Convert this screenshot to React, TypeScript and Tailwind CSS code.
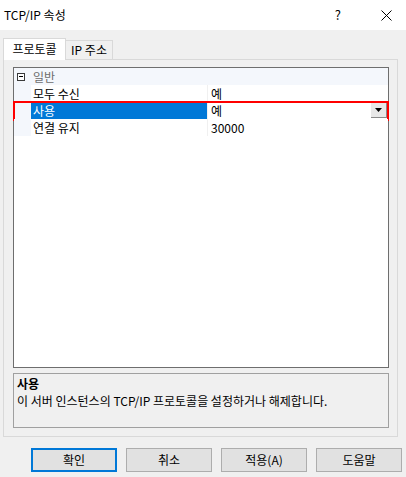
import React from "react";

const font = "font-['Noto_Sans_CJK_KR','Noto_Sans',sans-serif]";

function Row({ name, value, selected }: { name: string; value: string; selected?: boolean }) {
  return (
    <div className="relative flex h-[17px] items-stretch">
      <div className="w-[17px] bg-[#f4f7fc]" />
      <div
        className={
          "flex w-[176px] items-center pl-[2px] " +
          (selected ? "bg-[#0078d7] text-white" : "bg-white text-black")
        }
      >
        {name}
      </div>
      <div className="w-px bg-[#f0f0f0]" />
      <div className="flex flex-1 items-center bg-white pl-[3px] text-black">{value}</div>
      {selected && (
        <>
          <div className="absolute right-[1px] top-[1px] flex h-[15px] w-[16px] items-center justify-center border-b border-r border-[#8a8a8a] bg-[#e8e8e8]">
            <svg width="7" height="4" viewBox="0 0 7 4">
              <path d="M0 0 L7 0 L3.5 4 Z" fill="#000" />
            </svg>
          </div>
          <div className="pointer-events-none absolute -left-[1px] -right-[1px] -top-[1px] -bottom-[2px] border-2 border-[#ff0000]" />
        </>
      )}
    </div>
  );
}

function Btn({ label, def }: { label: string; def?: boolean }) {
  return (
    <div
      className={
        "flex h-[24px] w-[86px] items-center justify-center bg-[#e1e1e1] text-[12px] text-black " +
        (def ? "border-2 border-[#0078d7]" : "border border-[#adadad]")
      }
    >
      {label}
    </div>
  );
}

export default function App() {
  return (
    <div className={"flex h-[477px] w-[406px] flex-col bg-[#f0f0f0] text-[12px] " + font}>
      {/* title bar */}
      <div className="flex h-[30px] items-center bg-white pl-[4px] pr-[14px]">
        <span className="text-[12px] text-black">TCP/IP 속성</span>
        <span className="ml-auto mr-[40px] text-[13px] text-black">?</span>
        <svg width="11" height="11" viewBox="0 0 11 11">
          <path d="M0.5 0.5 L10.5 10.5 M10.5 0.5 L0.5 10.5" stroke="#000" strokeWidth="1" />
        </svg>
      </div>

      {/* tabs */}
      <div className="flex h-[29px] items-end pl-[3px] pt-[7px]">
        <div className="relative z-10 -mb-px flex h-[22px] w-[63px] items-center justify-center border border-b-0 border-[#d9d9d9] bg-white pb-[1px] text-black">
          프로토콜
        </div>
        <div className="flex h-[19px] w-[47px] items-center justify-center border border-b-0 border-l-0 border-[#d9d9d9] bg-[#f0f0f0] text-black">
          IP 주소
        </div>
      </div>

      {/* panel */}
      <div className="mx-[3px] flex h-[378px] w-[395px] flex-col border border-[#d9d9d9] bg-[#f0f0f0] pb-[8px] pl-[9px] pr-[8px] pt-[7px]">
        <div className="flex h-[301px] flex-col border border-[#6e6e6e] bg-white">
          <div className="flex h-[17px] items-center bg-[#f4f7fc]">
            <div className="ml-[3px] flex h-[8px] w-[8px] items-center justify-center border border-[#3a3a3a] bg-white">
              <div className="h-px w-[4px] bg-black" />
            </div>
            <span className="ml-[8px] text-[#6d6d6d]">일반</span>
          </div>
          <Row name="모두 수신" value="예" />
          <Row name="사용" value="예" selected />
          <Row name="연결 유지" value="30000" />
          <div className="flex flex-1">
            <div className="w-[17px] bg-white" />
          </div>
        </div>
        <div className="mt-[5px] flex h-[55px] flex-col border border-[#a0a0a0] bg-[#f0f0f0] px-[3px] pt-[1px] leading-[17px] text-black">
          <span className="font-bold">사용</span>
          <span>이 서버 인스턴스의 TCP/IP 프로토콜을 설정하거나 해제합니다.</span>
        </div>
      </div>

      {/* buttons */}
      <div className="flex gap-[9px] pl-[31px] pt-[11px]">
        <Btn label="확인" def />
        <Btn label="취소" />
        <Btn label="적용(A)" />
        <Btn label="도움말" />
      </div>
    </div>
  );
}
